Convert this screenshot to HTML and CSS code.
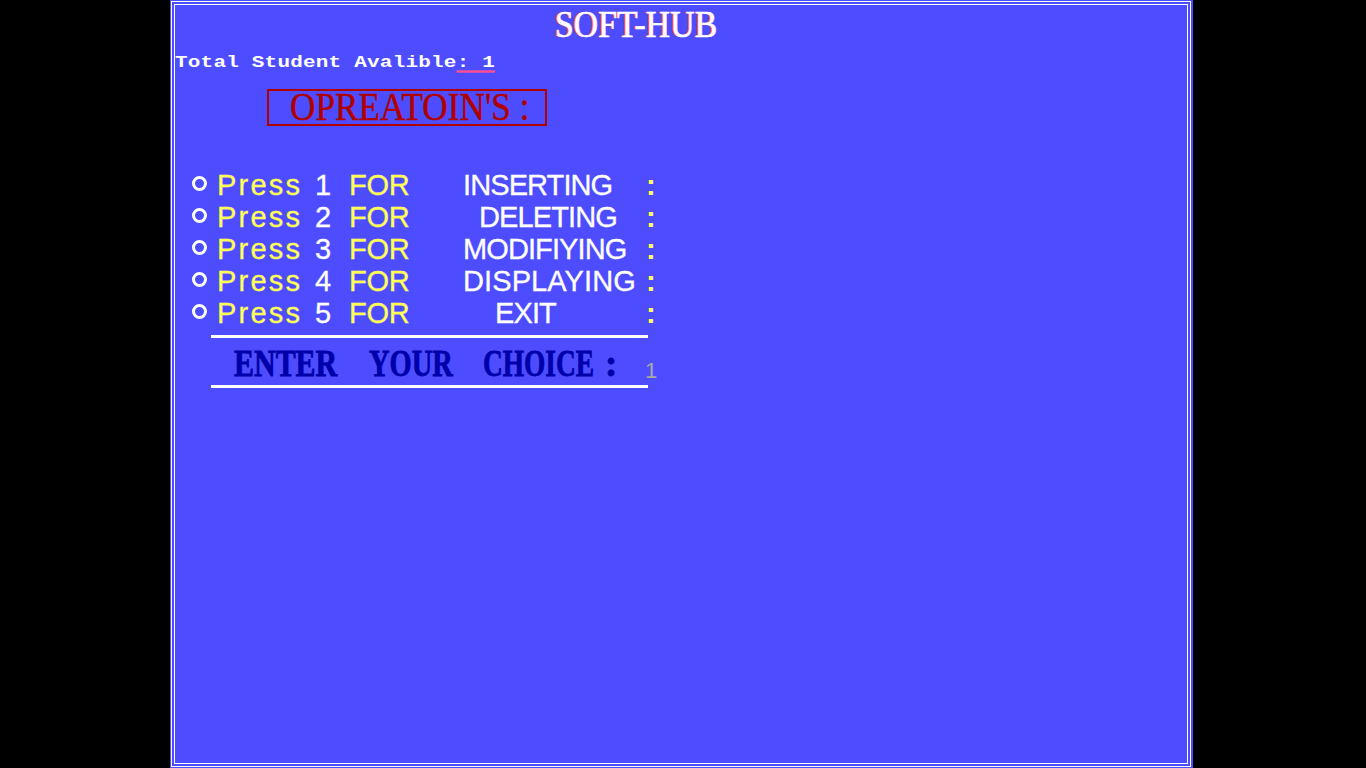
FILE: index.html
```html
<!DOCTYPE html>
<html>
<head>
<meta charset="utf-8">
<title>SOFT-HUB</title>
<link rel="stylesheet" href="styles.css">
</head>
<body>
<div class="screen">
  <div class="frame-outer">
    <div class="frame-inner">
      <div class="title"><span class="title-text">SOFT-HUB</span></div>
      <div class="total">Total Student Avalible<span class="total-val">: 1</span></div>
      <div class="ops-box"><span class="ops-text">OPREATOIN'S :</span></div>
      <div class="menu">
        <span class="bullet"></span><span class="press">Press</span><span class="num">1</span><span class="for">FOR</span><span class="opt">INSERTING</span><span class="colon">:</span>
        <span class="bullet"></span><span class="press">Press</span><span class="num">2</span><span class="for">FOR</span><span class="opt indent1">DELETING</span><span class="colon">:</span>
        <span class="bullet"></span><span class="press">Press</span><span class="num">3</span><span class="for">FOR</span><span class="opt">MODIFIYING</span><span class="colon">:</span>
        <span class="bullet"></span><span class="press">Press</span><span class="num">4</span><span class="for">FOR</span><span class="opt opt-wide">DISPLAYING</span><span class="colon">:</span>
        <span class="bullet"></span><span class="press">Press</span><span class="num">5</span><span class="for">FOR</span><span class="opt indent2">EXIT</span><span class="colon">:</span>
      </div>
      <div class="rule"></div>
      <div class="choice"><span class="cell c-enter"><span class="w-enter">ENTER</span></span><span class="cell c-your"><span class="w-your">YOUR</span></span><span class="cell c-choice"><span class="w-choice">CHOICE</span></span><span class="cell c-colon">:</span><span class="choice-val">1</span></div>
      <div class="rule rule-bottom"></div>
    </div>
  </div>
</div>
</body>
</html>
```

FILE: styles.css
```css
html, body {
  margin: 0;
  padding: 0;
  background: #000;
}

.screen {
  margin-left: 170px;
  width: 1023px;
  height: 768px;
  box-sizing: border-box;
  padding: 1px 2px 1px 1px;
  background: #4d4dff;
}

.frame-outer {
  height: 100%;
  box-sizing: border-box;
  border: 1px solid #fff;
  padding: 2px;
}

.frame-inner {
  height: 100%;
  box-sizing: border-box;
  border: 1px solid #fff;
}

.title {
  height: 39px;
  line-height: 39px;
  padding-left: 380px;
  font-family: "Liberation Serif", serif;
  font-size: 38px;
  white-space: nowrap;
}

.title-text {
  display: inline-block;
  color: #fff;
  -webkit-text-stroke: 0.5px #fff;
  text-shadow: -2px 0 #ff4f5f;
  transform: scaleX(0.89);
  transform-origin: left center;
}

.total {
  margin-top: 8px;
  height: 20px;
  line-height: 20px;
  font-family: "Liberation Mono", monospace;
  font-weight: bold;
  font-size: 21px;
  letter-spacing: 0.2px;
  color: #fff;
  white-space: pre;
  transform: scaleY(0.8);
  transform-origin: 0 15.6px;
}

.total-val {
  text-decoration: underline;
  text-decoration-color: #ff4f8f;
  text-decoration-thickness: 3px;
  text-underline-offset: 4px;
}

.ops-box {
  margin: 17px 0 0 92px;
  width: 280px;
  height: 37px;
  box-sizing: border-box;
  border: 2px solid #b00000;
  padding-left: 21px;
  line-height: 32px;
  font-family: "Liberation Serif", serif;
  font-size: 40px;
  color: #b00000;
  white-space: nowrap;
}

.ops-text {
  display: inline-block;
  -webkit-text-stroke: 0.5px #b00000;
  transform: scaleX(0.88);
  transform-origin: left center;
}

.menu {
  margin: 43px 0 0 17px;
  display: grid;
  grid-template-columns: 25px 98px 34px 114px 183px auto;
  grid-auto-rows: 32px;
  font-family: "Liberation Sans", sans-serif;
  font-size: 29px;
  line-height: 32px;
  white-space: nowrap;
}

.bullet {
  width: 15px;
  height: 15px;
  box-sizing: border-box;
  border: 3px solid #fff;
  border-radius: 50%;
  margin-top: 7px;
}

.press {
  color: #ffff55;
  letter-spacing: 2.2px;
  -webkit-text-stroke: 0.3px #ffff55;
}

.num {
  color: #fff;
  -webkit-text-stroke: 0.3px #fff;
}

.for {
  color: #ffff55;
  letter-spacing: -0.3px;
  -webkit-text-stroke: 0.3px #ffff55;
}

.opt {
  color: #fff;
  letter-spacing: -0.9px;
  -webkit-text-stroke: 0.3px #fff;
}

.opt-wide {
  letter-spacing: 0.1px;
}

.indent1 {
  padding-left: 16px;
}

.indent2 {
  padding-left: 32px;
}

.colon {
  color: #ffff55;
  font-weight: bold;
}

.rule {
  margin: 6px 0 0 36px;
  width: 437px;
  height: 3px;
  background: #fff;
}

.rule-bottom {
  margin-top: 1px;
}

.choice {
  margin: 6px 0 0 59px;
  height: 40px;
  line-height: 40px;
  font-family: "Liberation Serif", serif;
  font-weight: bold;
  font-size: 37px;
  color: #0000aa;
  white-space: nowrap;
}

.cell {
  display: inline-block;
  -webkit-text-stroke: 0.8px #0000aa;
}

.cell > span {
  display: inline-block;
  transform-origin: left center;
}

.c-enter { width: 135px; }
.c-your { width: 114px; }
.c-choice { width: 122px; }
.c-colon { width: 40px; }

.w-enter { transform: scaleX(0.81); }
.w-your { transform: scaleX(0.77); }
.w-choice { transform: scaleX(0.74); }

.choice-val {
  font-family: "Liberation Sans", sans-serif;
  font-weight: normal;
  font-size: 22px;
  color: #a8a8a8;
  vertical-align: -2px;
}
```
